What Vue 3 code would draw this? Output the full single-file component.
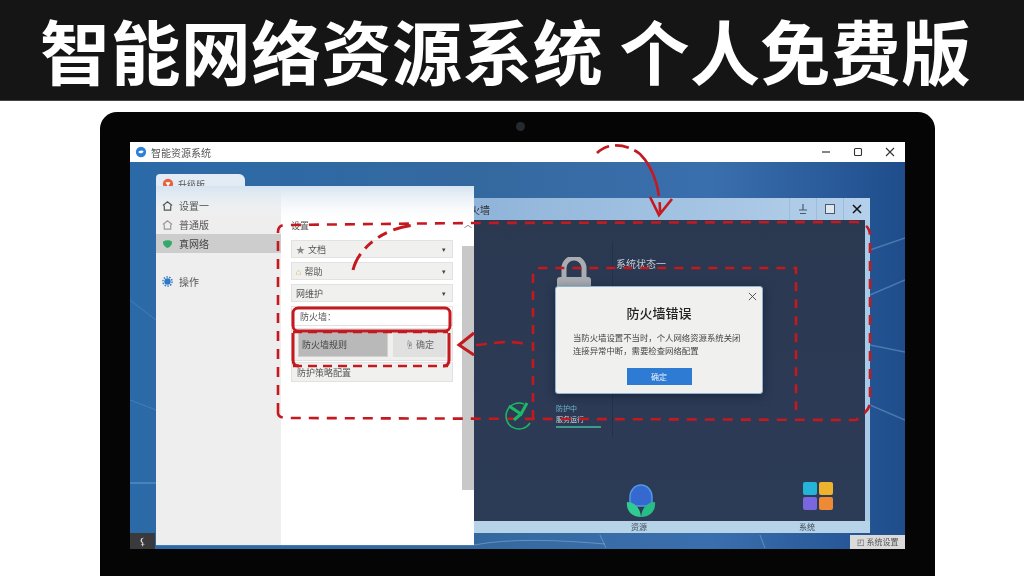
<script setup>
const navItems = [
  { label: "设置一", icon: "home" },
  { label: "普通版", icon: "home2" },
  { label: "真网络", icon: "shield", active: true },
];
const tiles = ["#25b4d8", "#eeb32c", "#7a67e0", "#ee8a35"];
</script>

<template>
  <div class="page">
    <header class="banner">
      <h1>智能网络资源系统 个人免费版</h1>
    </header>

    <div class="laptop">
      <span class="camera"></span>
      <div class="screen">
        <!-- 主窗口标题栏 -->
        <div class="titlebar">
          <svg class="app-logo" viewBox="0 0 14 14">
            <circle cx="7" cy="7" r="6" fill="#2f7fd8" />
            <path d="M4 7.5c0-2 4.500-3 6-1.500-.5 2-3.500 3.500-6 1.500z" fill="#fff" />
          </svg>
          <span class="app-name">智能资源系统</span>
          <div class="win-btns">
            <svg viewBox="0 0 12 12"><path d="M2 6h8" stroke="#333" stroke-width="1.200" /></svg>
            <svg viewBox="0 0 12 12"><rect x="2.500" y="2.500" width="7" height="7" rx="1" fill="none" stroke="#333" stroke-width="1.100" /></svg>
            <svg viewBox="0 0 12 12"><path d="M2 2l8 8M10 2l-8 8" stroke="#333" stroke-width="1.100" /></svg>
          </div>
        </div>

        <div class="desktop">
          <svg class="streaks" viewBox="130 162 775 387">
            <path d="M870 250L905 238M870 295L905 280M870 345L905 352M870 405L905 420" stroke="#7fa8d4" stroke-width="1.500" opacity=".45" fill="none" />
            <path d="M130 483H156" stroke="#7fb0e0" stroke-width="1" opacity=".7" />
            <path d="M130 300L156 320M130 400L156 410" stroke="#6d9bce" stroke-width="1" opacity=".4" fill="none" />
            <path d="M474 545C510 538 560 540 605 544M600 535L606 548M760 535L765 548" stroke="#8fb8dc" stroke-width="1" opacity=".5" fill="none" />
          </svg>
        </div>

        <!-- 深色窗口 -->
        <section class="dark-win">
          <div class="dark-title">
            <span class="dark-title-text">防火墙</span>
            <span class="dark-btn"><svg viewBox="0 0 12 12"><path d="M6 1v6M2 7h8M3 10.500h6" stroke="#465a70" stroke-width="1.200" /></svg></span>
            <span class="dark-btn"><svg viewBox="0 0 12 12"><rect x="1.500" y="1.500" width="9" height="9" fill="#dfe6ee" stroke="#465a70" /></svg></span>
            <span class="dark-btn"><svg viewBox="0 0 12 12"><path d="M2 2l8 8M10 2l-8 8" stroke="#111" stroke-width="1.500" /></svg></span>
          </div>
          <div class="dark-body">
            <div class="status">系统状态一</div>
            <div class="divider"></div>
            <svg class="lock" viewBox="0 0 36 32">
              <path d="M8 20V11a10 10 0 0 1 20 0v9" fill="none" stroke="#a9adb2" stroke-width="5" />
              <rect x="1" y="20" width="34" height="12" rx="3" fill="#a9adb2" />
            </svg>
            <div class="mini-info">
              <span>防护中</span>
              <span class="mini-white">服务运行</span>
              <i></i>
            </div>
            <div class="dock-app leaf">
              <svg viewBox="0 0 30 34">
                <path d="M4 22V13a11 12 0 0 1 22 0v9z" fill="#3569cf" stroke="#4f9be8" stroke-width="1.500" />
                <path d="M15 33C6 33 0 27 1 18c7 0 13 5 14 15z" fill="#2fcb92" />
                <path d="M15 33c9 0 15-6 14-15-7 0-13 5-14 15z" fill="#27bd86" />
              </svg>
            </div>
            <div class="dock-app tiles">
              <span v-for="c in tiles" :key="c" :style="{ background: c }"></span>
            </div>
          </div>
          <div class="dark-foot">
            <span class="foot-a">资源</span>
            <span class="foot-b">系统</span>
          </div>
        </section>

        <!-- 错误对话框 -->
        <section class="dialog">
          <svg class="dialog-close" viewBox="0 0 10 10"><path d="M1 1l8 8M9 1l-8 8" stroke="#444" stroke-width="1" /></svg>
          <h2>防火墙错误</h2>
          <p>当防火墙设置不当时，个人网络资源系统关闭<br />连接异常中断，需要检查网络配置</p>
          <button class="ok">确定</button>
        </section>

        <!-- 设置窗口 -->
        <section class="settings">
          <div class="tab">
            <svg viewBox="0 0 14 14"><circle cx="7" cy="7" r="6" fill="#e8603c" /><path d="M4 5h6L7 10z" fill="#fff" /></svg>
            <span>升级版</span>
          </div>
          <div class="settings-panel">
            <aside class="sidebar">
              <div
                v-for="item in navItems"
                :key="item.label"
                class="nav-item"
                :class="{ active: item.active }"
              >
                <svg v-if="item.icon === 'shield'" viewBox="0 0 12 12"><path d="M1 4c3-2 7-2 10 0 0 4-3 6-5 7-2-1-5-3-5-7z" fill="#35a96a" /></svg>
                <svg v-else viewBox="0 0 12 12"><path d="M1 6l5-4 5 4M2.500 6v5h7V6" fill="none" :stroke="item.icon === 'home' ? '#555' : '#999'" stroke-width="1.300" /></svg>
                <span>{{ item.label }}</span>
              </div>
              <div class="nav-item gear">
                <svg viewBox="0 0 12 12"><circle cx="6" cy="6" r="3.500" fill="#2f78c8" /><circle cx="6" cy="6" r="5" fill="none" stroke="#2f78c8" stroke-width="1.600" stroke-dasharray="1.600 1.500" /></svg>
                <span>操作</span>
              </div>
            </aside>
            <div class="content">
              <div class="content-title">设置</div>
              <div class="row"><span class="row-ico">★</span>文档<b>▾</b></div>
              <div class="row"><span class="row-ico gold">⌂</span>帮助<b>▾</b></div>
              <div class="row">网维护<b>▾</b></div>
              <div class="row plain">防火墙：</div>
              <div class="row split">
                <span class="field">防火墙规则</span>
                <span class="hand">☝ 确定</span>
              </div>
              <div class="row last">防护策略配置</div>
              <div class="scroll-up">︿</div>
              <div class="scrollbar"></div>
            </div>
          </div>
        </section>

        <div class="corner-l">⚸</div>
        <div class="corner-r">◰ 系统设置</div>

        <!-- 红色标注 -->
        <svg class="notes" viewBox="130 142 775 407">
          <g fill="none" stroke="#c4191f" stroke-linecap="butt">
            <g stroke-width="2.600" stroke-dasharray="10 8">
              <path d="M278 413V232q0-7 7-7L470 223 855 222q15 1 15 14V402q0 9-14 18L288 418q-10 0-10-5" />
              <path d="M533 419V276q0-8 8-8H796V417" stroke-dasharray="9 8" />
              <path d="M293 332H448M293 366H448" stroke-dasharray="9 6" />
            </g>
            <path d="M353 270C358 248 384 228 414 225" stroke-width="3" stroke-dasharray="18 7 10 7 10 7" />
            <path d="M597 153C610 140 630 146 640 154 652 166 660 186 660 212" stroke-width="2.600" stroke-dasharray="14 6 14 6 40 0" />
            <path d="M650 197L659 215L672 199" stroke-width="2.600" />
            <rect x="293" y="308" width="157" height="23" rx="5" stroke-width="3" />
            <path d="M293 333V360q0 6 6 6M449 333V360q0 6-6 6" stroke-width="3" />
            <path d="M474 333L459 345L474 355" stroke-width="3" />
            <path d="M476 345C495 343 510 340 526 344" stroke-width="2.600" stroke-dasharray="11 7" />
          </g>
          <g fill="none" stroke="#1fb765" stroke-width="1.500">
            <path d="M530 423A13 13 0 1 1 524 404" />
            <path d="M509 406L521 414L527 403M521 414L514 420" stroke-width="3" />
          </g>
        </svg>
      </div>
    </div>
  </div>
</template>

<style scoped>
.page {
  width: 1024px;
  height: 576px;
  overflow: hidden;
  background: #fff;
  font-family: "Noto Sans CJK SC", "Noto Sans", sans-serif;
}

.banner {
  height: 101px;
  background: #151515;
  display: flex;
  align-items: center;
  padding-left: 40px;
  border-bottom: 1px solid #444;
  box-sizing: border-box;
}
.banner h1 {
  margin: 0;
  color: #fff;
  font-size: 70px;
  line-height: 1;
  font-weight: 700;
  white-space: pre;
  letter-spacing: .4px;
}

.laptop {
  position: relative;
  width: 835px;
  height: 470px;
  margin: 11px 0 0 100px;
  padding: 30px 30px 0;
  box-sizing: border-box;
  background: #050505;
  border-radius: 17px 17px 0 0;
}
.camera {
  position: absolute;
  left: 416px;
  top: 10px;
  width: 9px;
  height: 9px;
  border-radius: 50%;
  background: #252a30;
}

.screen {
  position: relative;
  width: 775px;
  height: 407px;
  overflow: hidden;
  display: flex;
  flex-direction: column;
  filter: blur(.35px);
}
.titlebar {
  height: 20px;
  flex: none;
  display: flex;
  align-items: center;
  gap: 4px;
  padding-left: 5px;
  background: #fff;
  font-size: 10px;
  color: #555;
}
.app-logo { width: 12px; height: 12px; }
.win-btns {
  margin-left: auto;
  display: flex;
  gap: 20px;
  padding-right: 9px;
}
.win-btns svg { width: 12px; height: 12px; }

.desktop {
  flex: 1;
  position: relative;
  background: linear-gradient(90deg, #2b6aa8 0, #34699f 45%, #3a6fae 75%, #1f4d8c 100%);
}
.streaks { position: absolute; inset: 0; width: 100%; height: 100%; }

.dark-win {
  position: absolute;
  left: 330px;
  top: 56px;
  width: 410px;
  height: 335px;
  display: flex;
  flex-direction: column;
  background: #a9cbe8;
}
.dark-title {
  height: 22px;
  flex: none;
  display: flex;
  align-items: center;
  justify-content: flex-end;
  background: linear-gradient(90deg, #8eb3d9, #b5d0ea);
  padding-right: 0;
  position: relative;
}
.dark-title-text {
  position: absolute;
  left: 0;
  top: 4px;
  font-size: 10px;
  color: #333;
}
.dark-btn {
  width: 26px;
  height: 22px;
  display: flex;
  align-items: center;
  justify-content: center;
  border-left: 1px solid #9dbcdb;
  box-sizing: border-box;
  margin-right: 1px;
}
.dark-btn svg { width: 12px; height: 12px; }
.dark-body {
  flex: 1;
  position: relative;
  margin-right: 5px;
  background: linear-gradient(180deg, #2a3850, #2c3a55 60%, #2d3c56);
}
.status {
  position: absolute;
  left: 156px;
  top: 36px;
  font-size: 10px;
  color: #c6ccd4;
}
.divider {
  position: absolute;
  left: 152px;
  top: 22px;
  width: 1px;
  height: 195px;
  background: #25314a;
}
.lock {
  position: absolute;
  left: 96px;
  top: 37px;
  width: 36px;
  height: 32px;
}
.mini-info {
  position: absolute;
  left: 96px;
  top: 184px;
  display: flex;
  flex-direction: column;
  gap: 3px;
  font-size: 7px;
  line-height: 8px;
  color: #6fb5cf;
}
.mini-white { color: #cdd6de; }
.mini-info i {
  width: 45px;
  height: 2px;
  background: #3e9a8a;
}
.dock-app { position: absolute; }
.leaf {
  left: 166px;
  top: 264px;
  width: 30px;
  height: 34px;
}
.leaf svg { width: 100%; height: 100%; display: block; }
.tiles {
  left: 343px;
  top: 262px;
  display: grid;
  grid-template-columns: 14px 14px;
  grid-auto-rows: 13px;
  gap: 2px;
}
.tiles span { border-radius: 2px; }
.dark-foot {
  height: 12px;
  flex: none;
  position: relative;
  background: #b7d3e8;
  font-size: 8px;
  line-height: 12px;
  color: #3f4a58;
}
.foot-a { position: absolute; left: 171px; }
.foot-b { position: absolute; left: 339px; }

.dialog {
  position: absolute;
  left: 425px;
  top: 144px;
  width: 208px;
  height: 108px;
  box-sizing: border-box;
  padding-top: 17px;
  background: #f0f0ef;
  border: 1px solid #8fb2cf;
  border-radius: 3px;
  box-shadow: 0 2px 10px rgba(10, 20, 40, .5);
  text-align: center;
  color: #333;
}
.dialog-close {
  position: absolute;
  right: 5px;
  top: 5px;
  width: 9px;
  height: 9px;
}
.dialog h2 {
  margin: 0;
  font-size: 13px;
  line-height: 18px;
  font-weight: 500;
  color: #222;
}
.dialog p {
  margin: 9px 0 0;
  padding-left: 17px;
  font-size: 8.400px;
  line-height: 13px;
  color: #444;
  text-align: left;
  white-space: nowrap;
}
.ok {
  display: block;
  width: 65px;
  height: 17px;
  margin: 11px auto 0;
  padding: 0;
  border: 0;
  background: #2d7bd3;
  color: #e8f0fa;
  font: 8px/17px "Noto Sans CJK SC", sans-serif;
}

.settings {
  position: absolute;
  left: 26px;
  top: 32px;
  width: 318px;
  height: 372px;
  display: flex;
  flex-direction: column;
}
.tab {
  width: 89px;
  height: 17px;
  flex: none;
  margin-bottom: -5px;
  display: flex;
  align-items: center;
  gap: 4px;
  padding: 3px 0 0 6px;
  box-sizing: border-box;
  background: #e3ecf5;
  border-radius: 4px 6px 0 0;
  font-size: 9px;
  color: #555;
}
.tab svg { width: 12px; height: 12px; }
.settings-panel {
  flex: 1;
  display: flex;
  background: linear-gradient(180deg, #d6e4f1 0, #edf2f7 26px, #fff 40px);
  border-bottom: 1px solid #4a7bb0;
  position: relative;
}
.sidebar {
  width: 125px;
  flex: none;
  padding-top: 10px;
  background: linear-gradient(180deg, transparent 0, #eeeeee 30px);
}
.nav-item {
  height: 19px;
  display: flex;
  align-items: center;
  gap: 6px;
  padding-left: 6px;
  font-size: 10px;
  color: #555;
}
.nav-item svg { width: 11px; height: 11px; flex: none; }
.nav-item.active { background: #cdcdcd; color: #444; }
.nav-item.gear { margin-top: 19px; }
.content {
  flex: 1;
  position: relative;
  padding: 33px 21px 0 10px;
  background: #fff;
  margin-top: 24px;
  margin-top: 0;
  background: linear-gradient(180deg, transparent 0, #fff 34px);
}
.content-title {
  font-size: 9px;
  line-height: 13px;
  margin-bottom: 8px;
  color: #555;
}
.row {
  height: 18px;
  margin-bottom: 4px;
  padding: 0 6px 0 4px;
  display: flex;
  align-items: center;
  gap: 3px;
  background: #f0f0ef;
  border: 1px solid #e2e2e2;
  box-sizing: border-box;
  font-size: 9px;
  color: #555;
}
.row b {
  margin-left: auto;
  font-size: 7px;
  font-weight: 400;
  color: #444;
}
.row-ico { font-size: 9px; color: #888; }
.gold { color: #d6a92a; font-weight: 700; }
.plain {
  height: 20px;
  margin: 1px 0 2px;
  background: #fff;
  padding-left: 8px;
}
.split {
  height: 33px;
  padding: 3px 6px;
  gap: 5px;
  align-items: stretch;
  margin-bottom: 1px;
}
.field {
  width: 90px;
  background: #b9b9b9;
  border: 1px solid #d0d0d0;
  box-sizing: border-box;
  display: flex;
  align-items: center;
  padding-left: 3px;
  color: #444;
}
.hand {
  flex: 1;
  background: #e0e0e0;
  display: flex;
  align-items: center;
  justify-content: center;
  white-space: nowrap;
  color: #666;
}
.last { height: 20px; padding-left: 5px; margin: 0; }
.scroll-up {
  position: absolute;
  right: 0;
  top: 32px;
  width: 12px;
  text-align: center;
  font-size: 8px;
  line-height: 12px;
  color: #666;
}
.scrollbar {
  position: absolute;
  right: 0;
  top: 60px;
  width: 12px;
  height: 244px;
  background: #c8c8c8;
}

.corner-l {
  position: absolute;
  left: 0;
  bottom: 0;
  width: 25px;
  height: 16px;
  background: #3a3a3c;
  color: #ddd;
  font-size: 10px;
  line-height: 16px;
  text-align: center;
}
.corner-r {
  position: absolute;
  right: 0;
  bottom: 0;
  width: 55px;
  height: 14px;
  background: #dadada;
  color: #555;
  font-size: 8px;
  line-height: 14px;
  text-align: center;
  white-space: nowrap;
}
.notes {
  position: absolute;
  inset: 0;
  width: 100%;
  height: 100%;
}
</style>
